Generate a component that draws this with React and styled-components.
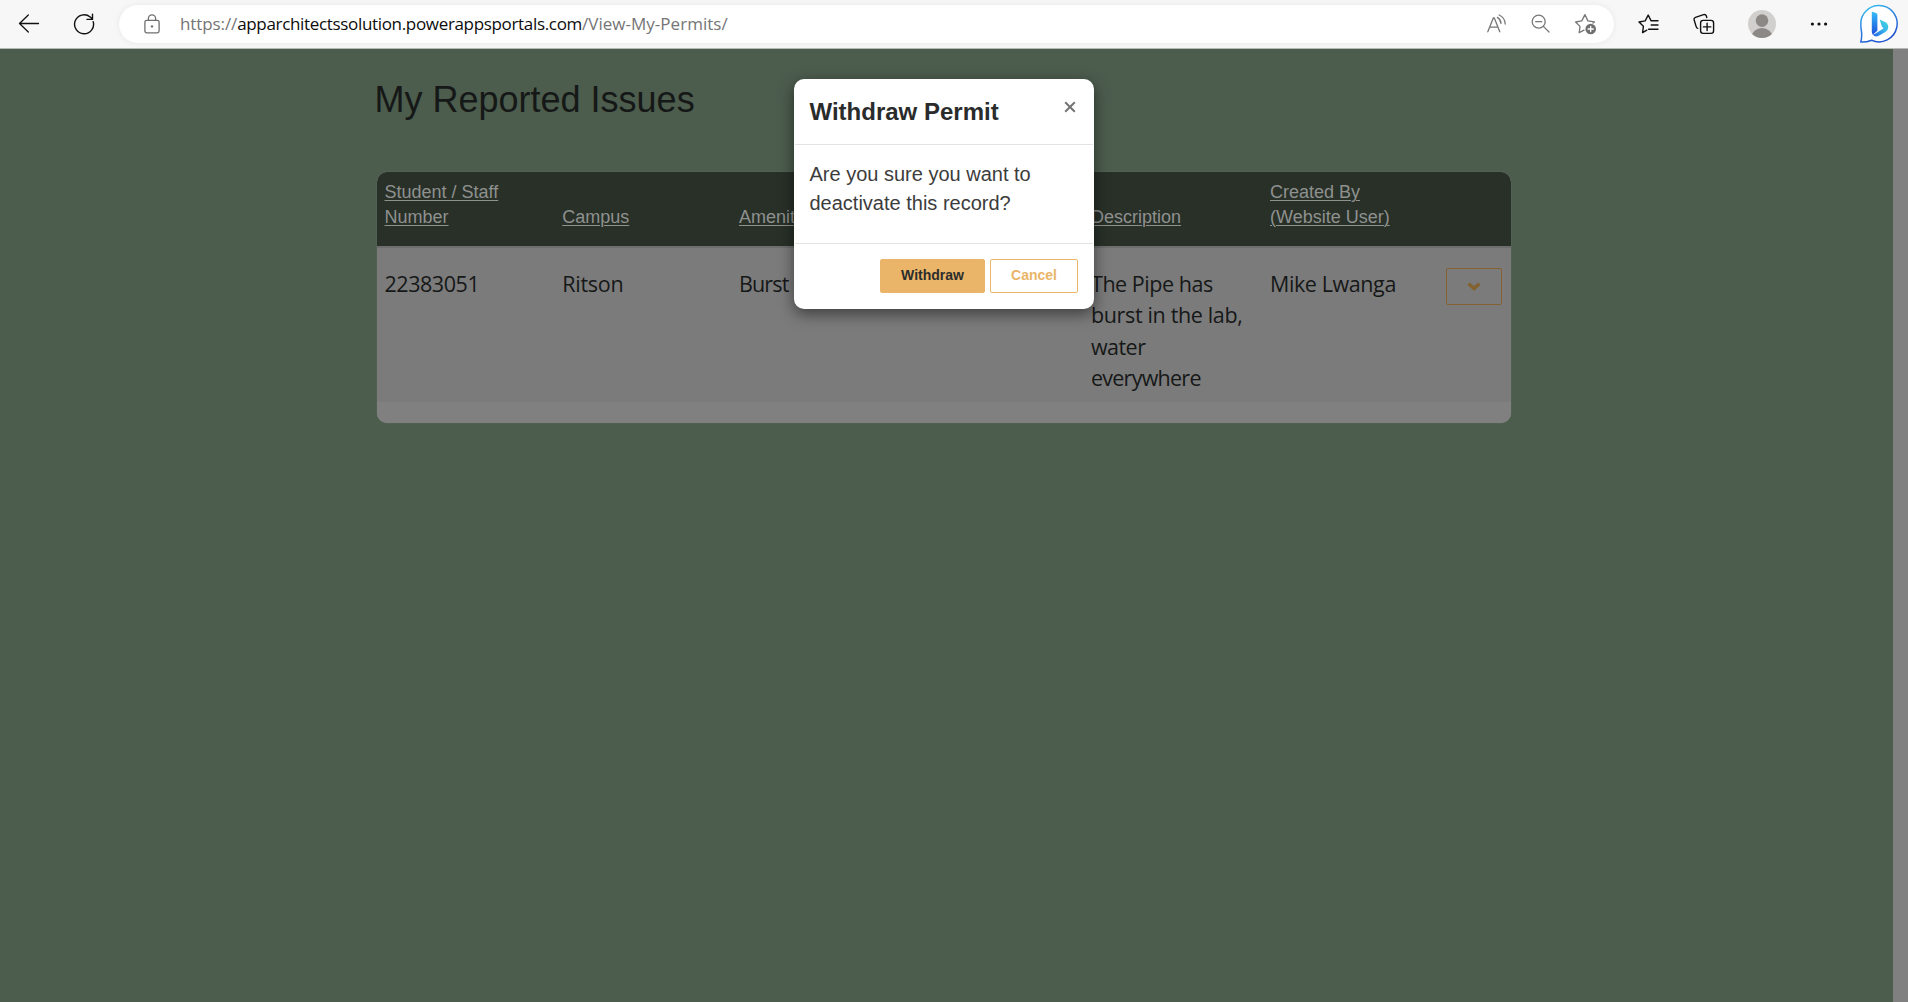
import React from "react";
import styled, { createGlobalStyle } from "styled-components";

const GlobalStyle = createGlobalStyle`
  * { box-sizing: border-box; }
  html, body { margin: 0; height: 100%; overflow: hidden; }
  body { font-family: "Liberation Sans", Arial, sans-serif; background: #4c5c4d; }
  svg { display: block; flex: none; }
`;

const Screen = styled.div`
  display: flex;
  flex-direction: column;
  height: 100vh;
  position: relative;
`;

const Toolbar = styled.header`
  display: grid;
  grid-template-columns: 58px 52px 1504px 70px 40px 76px 38px 1fr;
  align-items: center;
  height: 49px;
  flex: none;
  background: #f7f7f7;
  border-bottom: 1px solid #b5bab5;
`;

const ToolButton = styled.div`
  display: flex;
  align-items: center;
  justify-content: center;
  height: 48px;
  padding-left: ${(p) => p.$shift || 0}px;
`;

const AddressBar = styled.div`
  display: flex;
  align-items: center;
  height: 38px;
  margin-left: 9px;
  padding-right: 7px;
  border-radius: 19px;
  background: #fff;
  box-shadow: 0 0 6px rgba(0, 0, 0, 0.07);
`;

const AddressIcon = styled.div`
  display: flex;
  justify-content: center;
  width: ${(p) => p.$width || 44}px;
  padding-left: ${(p) => p.$shift || 0}px;
`;

const Url = styled.div`
  flex: 1;
  font-family: "Open Sans", "Noto Sans", sans-serif;
  font-size: 17px;
  line-height: 24px;
  white-space: nowrap;
  color: #757575;
`;

const UrlPart = styled.span`
  color: ${(p) => p.$color || "#757575"};
  letter-spacing: ${(p) => p.$track}px;
`;

const Viewport = styled.div`
  display: flex;
  flex: 1;
  background: #4c5c4d;
`;

const Content = styled.main`
  flex: 1;
  padding: 30px 0 0 377px;
`;

const Scrollbar = styled.div`
  width: 15px;
  background: #808080;
`;

const Title = styled.h1`
  margin: 0 0 52px -2.5px;
  font-size: 36px;
  font-weight: 400;
  line-height: 41px;
  color: #151817;
`;

const Table = styled.section`
  width: 1134px;
  border-radius: 10px;
  overflow: hidden;
  background: #808080;
  padding-bottom: 21px;
  box-shadow: 0 0 1px #7f8a7f;
`;

const columns = "177.7px 176.8px 176px 176px 179px 175px 1fr";

const HeadRow = styled.div`
  display: grid;
  grid-template-columns: ${columns};
  align-items: end;
  height: 76px;
  padding: 0 0 16px 7.5px;
  background: #283028;
  border-bottom: 2px solid #6e6e6e;
`;

const HeadCell = styled.div`
  font-size: 18px;
  line-height: 25px;
  color: #8f918f;
  text-decoration: underline;
  text-decoration-thickness: 1px;
  text-underline-offset: 2px;
`;

const BodyRow = styled.div`
  display: grid;
  grid-template-columns: ${columns};
  height: 154px;
  padding: 20px 0 0 7.5px;
  background: #7b7b7b;
`;

const BodyCell = styled.div`
  font-family: "Open Sans", "Noto Sans", sans-serif;
  font-size: 21.5px;
  line-height: 31.4px;
  letter-spacing: ${(p) => p.$track || 0}px;
  white-space: nowrap;
  color: #161818;
`;

const TextLine = styled.div`
  letter-spacing: ${(p) => p.$track}px;
`;

const MenuButton = styled.button`
  display: flex;
  align-items: center;
  justify-content: center;
  width: 56px;
  height: 37px;
  margin-left: 1px;
  padding: 0;
  border: 1px solid #83622f;
  border-radius: 2px;
  background: transparent;
`;

const Dialog = styled.div`
  position: absolute;
  left: 794px;
  top: 79px;
  width: 300px;
  height: 230px;
  display: flex;
  flex-direction: column;
  border-radius: 10px;
  background: #fff;
  box-shadow: 0 5px 15px rgba(0, 0, 0, 0.5);
`;

const DialogHeader = styled.div`
  display: flex;
  justify-content: space-between;
  height: 66px;
  margin: 0 1px;
  padding: 16px 17.5px 0 14.5px;
  border-bottom: 1px solid #e3e3e3;
`;

const DialogTitle = styled.h4`
  margin: 0;
  font-size: 24px;
  font-weight: 700;
  line-height: 34px;
  white-space: nowrap;
  color: #2a2c2c;
`;

const DialogClose = styled.div`
  padding-top: 5.5px;
`;

const DialogBody = styled.div`
  flex: 1;
  margin: 0 1px;
  padding: 15px 15px 0 14.5px;
  font-size: 20px;
  line-height: 29px;
  color: #3c3c3c;
  white-space: nowrap;
`;

const DialogFooter = styled.div`
  display: flex;
  justify-content: flex-end;
  gap: 5px;
  height: 66px;
  margin: 0 1px;
  padding: 15px 15px 0;
  border-top: 1px solid #e3e3e3;
`;

const Button = styled.button`
  height: 34px;
  width: ${(p) => p.$width}px;
  padding: 0 0 2px;
  border: 1px solid #eab568;
  border-radius: 2px;
  font: 700 14px/30px "Liberation Sans", Arial, sans-serif;
  background: ${(p) => (p.$primary ? "#eab568" : "#fff")};
  color: ${(p) => (p.$primary ? "#2b2d2c" : "#eab568")};
`;

const BackIcon = () => (
  <svg width="22" height="20" viewBox="0 0 22 20" fill="none" stroke="#111" strokeWidth="1.3" strokeLinecap="round" strokeLinejoin="round">
    <path d="M20.5 9.5H1.5M10.3 1L1.5 9.5L10.3 18" />
  </svg>
);

const ReloadIcon = () => (
  <svg width="22" height="22" viewBox="0 0 22 22" fill="none" stroke="#111" strokeWidth="1.4" strokeLinecap="round" strokeLinejoin="round">
    <path d="M20.2 8.6A9.5 9.5 0 1 1 17.2 4L19.5 6M19.5 1.2V6.4H14" />
  </svg>
);

const LockIcon = () => (
  <svg width="16" height="20" viewBox="0 0 16 20" fill="none" stroke="#707070" strokeWidth="1.3">
    <rect x="0.9" y="6.4" width="14.2" height="12.4" rx="1.8" />
    <path d="M4.4 6.4V4.4a3.6 3.6 0 0 1 7.2 0v2" />
    <circle cx="8" cy="12.4" r="1.2" fill="#707070" stroke="none" />
  </svg>
);

const ReadAloudIcon = () => (
  <svg width="20" height="20" viewBox="0 0 20 20" fill="none" stroke="#777" strokeWidth="1.3" strokeLinecap="round" strokeLinejoin="round">
    <path d="M0.8 17.8L6.4 3.8h.8l5.6 14M2.7 13.2h7.8" />
    <path d="M10.4 3.4a7.6 7.6 0 0 1 3.6 6M12.2 1a10.3 10.3 0 0 1 6 9" />
  </svg>
);

const ZoomOutIcon = () => (
  <svg width="20" height="20" viewBox="0 0 20 20" fill="none" stroke="#777" strokeWidth="1.3" strokeLinecap="round">
    <circle cx="7.7" cy="7.7" r="6.5" />
    <path d="M12.4 12.4L18 18M4.7 7.7h6" />
  </svg>
);

const StarAddIcon = () => (
  <svg width="22" height="22" viewBox="0 0 22 22" fill="none" stroke="#777" strokeWidth="1.3" strokeLinecap="round" strokeLinejoin="round">
    <path d="M10 17.1L5.2 19.6L6 13.4L1.6 9L7.8 7.9L10.9 1.6L13.9 7.9L20.4 8.9L19 10" />
    <circle cx="16.7" cy="16" r="5.3" fill="#707070" stroke="none" />
    <path d="M16.7 13.4v5.2M14.1 16h5.2" stroke="#fff" />
  </svg>
);

const FavoritesIcon = () => (
  <svg width="22" height="20" viewBox="0 0 22 20" fill="none" stroke="#111" strokeWidth="1.4" strokeLinecap="round" strokeLinejoin="round">
    <path d="M8.8 16.2L4.6 18.6L5.4 12.3L1 8L7.2 6.9L10.2 1L13 6.6M13 6.8H20M13.2 11H20M10.6 15.2H20" />
  </svg>
);

const CollectionsIcon = () => (
  <svg width="22" height="22" viewBox="0 0 22 22" fill="none" stroke="#111" strokeWidth="1.4" strokeLinecap="round" strokeLinejoin="round">
    <path d="M4.7 15.4Q3.6 15.2 3 13.1L1.1 6.7Q.7 4.9 2.5 4.3L10.6 1.6Q12.6 1.1 13.3 2.8L13.8 4.5" />
    <rect x="7.6" y="7.4" width="13" height="13" rx="2.6" />
    <path d="M14.1 10.2v7.4M10.4 13.9h7.4" />
  </svg>
);

const AvatarIcon = () => (
  <svg width="28" height="28" viewBox="0 0 28 28">
    <clipPath id="avatarClip"><circle cx="14" cy="14" r="14" /></clipPath>
    <g clipPath="url(#avatarClip)">
      <rect width="28" height="28" fill="#d2d0ce" />
      <circle cx="14" cy="10.6" r="6.3" fill="#8b8885" />
      <ellipse cx="14" cy="26.8" rx="10.4" ry="8.7" fill="#8b8885" />
    </g>
  </svg>
);

const MoreIcon = () => (
  <svg width="18" height="4" viewBox="0 0 18 4" fill="#111">
    <circle cx="2.4" cy="2" r="1.6" />
    <circle cx="9" cy="2" r="1.6" />
    <circle cx="15.6" cy="2" r="1.6" />
  </svg>
);

const BingIcon = () => (
  <svg width="40" height="40" viewBox="0 0 40 40">
    <defs>
      <linearGradient id="bubble" x1="0" y1="0" x2="0.5" y2="1">
        <stop offset="0" stopColor="#35c8ef" />
        <stop offset="0.5" stopColor="#2f86e4" />
        <stop offset="1" stopColor="#2153cf" />
      </linearGradient>
      <linearGradient id="stem" x1="0" y1="0" x2="0" y2="1">
        <stop offset="0" stopColor="#35bdf8" />
        <stop offset="1" stopColor="#1b50dc" />
      </linearGradient>
      <linearGradient id="bowl" x1="1" y1="0" x2="0" y2="1">
        <stop offset="0" stopColor="#3fdcd3" />
        <stop offset="0.45" stopColor="#38b4ee" />
        <stop offset="1" stopColor="#2360e4" />
      </linearGradient>
    </defs>
    <path d="M20 1.6A18.1 18.1 0 1 1 12.6 36.2Q8 38.2 1.7 38.1Q3.6 32 2 24.5L1.8 20A18.1 18.1 0 0 1 20 1.6Z" fill="#fff" stroke="url(#bubble)" strokeWidth="1.5" strokeLinejoin="round" />
    <path d="M13.2 7.8L17 9.1Q18.4 9.7 18.4 11.2V26.7L13.8 30.8Q12.8 29.4 12.8 27.4V8.1Z" fill="url(#stem)" />
    <path d="M20.7 15.6L26.4 18.3Q29.7 20.2 29.2 24Q28.8 26.5 26.4 28L19.3 32.1Q15.9 33.4 13.6 30.6Q15.5 30.5 18.4 28.2L24.4 24.6L22.6 21.7Z" fill="url(#bowl)" />
  </svg>
);

const ChevronIcon = () => (
  <svg width="14" height="10" viewBox="0 0 14 10">
    <path d="M0.4 2.8L2.9 0.5L7 4.2L11.1 0.5L13.6 2.8L7 9.1Z" fill="#83622f" />
  </svg>
);

const CloseIcon = () => (
  <svg width="12" height="12" viewBox="0 0 12 12" stroke="#747474" strokeWidth="2">
    <path d="M1.2 1.2L10.8 10.8M10.8 1.2L1.2 10.8" />
  </svg>
);

export default function App() {
  return (
    <>
      <GlobalStyle />
      <Screen>
        <Toolbar>
          <ToolButton><BackIcon /></ToolButton>
          <ToolButton><ReloadIcon /></ToolButton>
          <AddressBar>
            <AddressIcon $width={61} $shift={4}><LockIcon /></AddressIcon>
            <Url>
              <UrlPart $track={-0.1}>https://</UrlPart>
              <UrlPart $color="#0c0c0c" $track={-0.33}>apparchitectssolution.powerappsportals.com</UrlPart>
              <UrlPart $track={0.03}>/View-My-Permits/</UrlPart>
            </Url>
            <AddressIcon><ReadAloudIcon /></AddressIcon>
            <AddressIcon><ZoomOutIcon /></AddressIcon>
            <AddressIcon><StarAddIcon /></AddressIcon>
          </AddressBar>
          <ToolButton><FavoritesIcon /></ToolButton>
          <ToolButton><CollectionsIcon /></ToolButton>
          <ToolButton><AvatarIcon /></ToolButton>
          <ToolButton><MoreIcon /></ToolButton>
          <ToolButton $shift={12}><BingIcon /></ToolButton>
        </Toolbar>
        <Viewport>
          <Content>
            <Title>My Reported Issues</Title>
            <Table>
              <HeadRow>
                <HeadCell>Student / Staff<br />Number</HeadCell>
                <HeadCell>Campus</HeadCell>
                <HeadCell>Amenity</HeadCell>
                <HeadCell />
                <HeadCell>Description</HeadCell>
                <HeadCell>Created By<br />(Website User)</HeadCell>
                <HeadCell />
              </HeadRow>
              <BodyRow>
                <BodyCell $track={-0.45}>22383051</BodyCell>
                <BodyCell $track={-0.25}>Ritson</BodyCell>
                <BodyCell $track={-0.85}>Burst</BodyCell>
                <BodyCell />
                <BodyCell>
                  <TextLine $track={-0.45}>The Pipe has</TextLine>
                  <TextLine $track={-0.35}>burst in the lab,</TextLine>
                  <TextLine $track={-0.55}>water</TextLine>
                  <TextLine $track={-0.75}>everywhere</TextLine>
                </BodyCell>
                <BodyCell $track={-0.4}>Mike Lwanga</BodyCell>
                <MenuButton aria-label="Actions"><ChevronIcon /></MenuButton>
              </BodyRow>
            </Table>
          </Content>
          <Scrollbar />
        </Viewport>
        <Dialog role="dialog">
          <DialogHeader>
            <DialogTitle>Withdraw Permit</DialogTitle>
            <DialogClose><CloseIcon /></DialogClose>
          </DialogHeader>
          <DialogBody>Are you sure you want to<br />deactivate this record?</DialogBody>
          <DialogFooter>
            <Button $primary $width={105}>Withdraw</Button>
            <Button $width={88}>Cancel</Button>
          </DialogFooter>
        </Dialog>
      </Screen>
    </>
  );
}
